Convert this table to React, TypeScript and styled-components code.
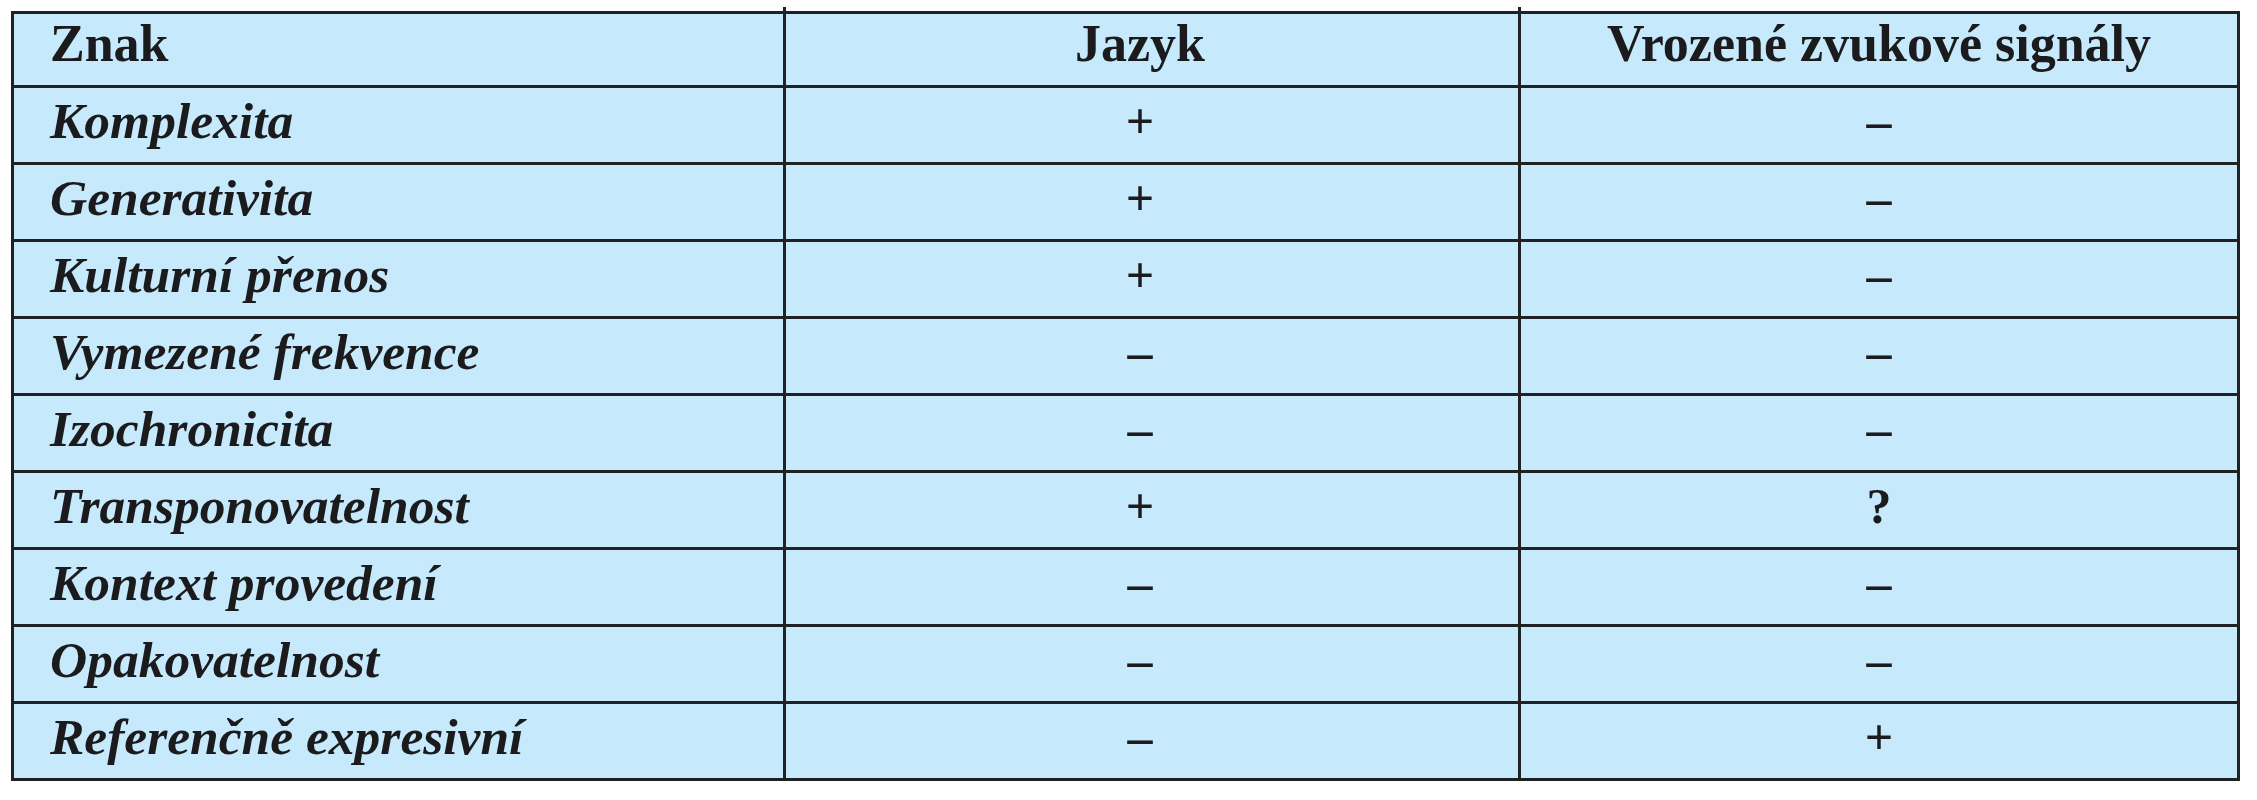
import React from "react";
import styled, { createGlobalStyle } from "styled-components";

const Global = createGlobalStyle`
  html, body { margin: 0; padding: 0; background: #ffffff; }
  body { font-family: "Liberation Serif", "Times New Roman", serif; }
`;

const Page = styled.div`
  padding: 11px;
`;

const Grid = styled.div`
  display: grid;
  grid-template-columns: 772px 735px 719px;
  width: 2226px;
  border-top: 3px solid #1f2124;
  border-left: 3px solid #1f2124;
  background: #c6e9fb;
  color: #1b1b1d;
`;

const Cell = styled.div<{ $head?: boolean; $align: "left" | "center"; $shiftLeft?: boolean }>`
  position: relative;
  box-sizing: border-box;
  height: ${(p) => (p.$head ? 74 : 77)}px;
  border-right: 3px solid #1f2124;
  border-bottom: 3px solid #1f2124;
  display: flex;
  align-items: center;
  justify-content: ${(p) => (p.$align === "left" ? "flex-start" : "center")};
  padding: 0 ${(p) => (p.$shiftLeft ? 24 : 0)}px ${(p) => (p.$head ? 12 : 8)}px
    ${(p) => (p.$align === "left" ? 36 : 0)}px;
  font-family: "Liberation Serif", "Times New Roman", serif;
  font-weight: 700;
  font-size: ${(p) => (p.$head ? 52 : 51.5)}px;
  line-height: 1;
  white-space: nowrap;
`;

const HeadCell = styled(Cell)<{ $tick?: boolean }>`
  ${(p) =>
    p.$tick
      ? `&::before {
    content: "";
    position: absolute;
    right: -3px;
    top: -7px;
    width: 3px;
    height: 4px;
    background: #1f2124;
  }`
      : ""}
`;

const Label = styled.span`
  font-style: italic;
`;

const Mark = styled.span`
  font-size: 50px;
  font-style: normal;
`;

type Row = { name: string; jazyk: string; vrozene: string };

const rows: Row[] = [
  { name: "Komplexita", jazyk: "+", vrozene: "–" },
  { name: "Generativita", jazyk: "+", vrozene: "–" },
  { name: "Kulturní přenos", jazyk: "+", vrozene: "–" },
  { name: "Vymezené frekvence", jazyk: "–", vrozene: "–" },
  { name: "Izochronicita", jazyk: "–", vrozene: "–" },
  { name: "Transponovatelnost", jazyk: "+", vrozene: "?" },
  { name: "Kontext provedení", jazyk: "–", vrozene: "–" },
  { name: "Opakovatelnost", jazyk: "–", vrozene: "–" },
  { name: "Referenčně expresivní", jazyk: "–", vrozene: "+" },
];

export default function App() {
  return (
    <Page>
      <Global />
      <Grid role="table">
        <HeadCell $head $align="left" $tick role="columnheader">
          Znak
        </HeadCell>
        <HeadCell $head $align="center" $shiftLeft $tick role="columnheader">
          Jazyk
        </HeadCell>
        <HeadCell $head $align="center" role="columnheader">
          Vrozené zvukové signály
        </HeadCell>
        {rows.map((r) => (
          <React.Fragment key={r.name}>
            <Cell $align="left" role="cell">
              <Label>{r.name}</Label>
            </Cell>
            <Cell $align="center" $shiftLeft role="cell">
              <Mark>{r.jazyk}</Mark>
            </Cell>
            <Cell $align="center" role="cell">
              <Mark>{r.vrozene}</Mark>
            </Cell>
          </React.Fragment>
        ))}
      </Grid>
    </Page>
  );
}
